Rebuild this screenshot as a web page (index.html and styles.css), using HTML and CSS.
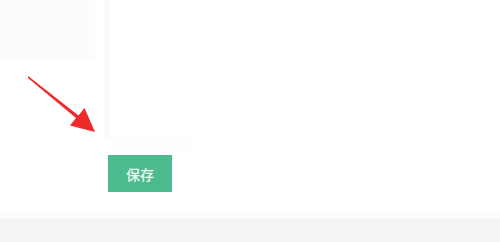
FILE: index.html
```html
<!DOCTYPE html>
<html lang="zh">
<head>
<meta charset="utf-8">
<link rel="stylesheet" href="styles.css">
</head>
<body>
<div class="page">
  <div class="main">
    <div class="side">
      <div class="side-top"></div>
    </div>
    <div class="divider"></div>
    <div class="content">
      <div class="editor"></div>
      <div class="editor-foot"></div>
      <div class="actions">
        <button class="btn-save">保存</button>
      </div>
    </div>
  </div>
  <div class="footer-line"></div>
  <div class="footer"></div>
  <svg class="arrow" width="100" height="140" viewBox="0 0 100 140">
    <polygon points="28,76 30,77.5 78.5,115.5 84.5,108 95,132 70,125.5 76,118 28,78" fill="#ee2a2a"/>
  </svg>
</div>
</body>
</html>
```

FILE: styles.css
```css
html, body {
  margin: 0;
  padding: 0;
  background: #ffffff;
}
.page {
  position: relative;
  width: 500px;
  height: 242px;
  overflow: hidden;
  font-family: "Noto Sans CJK SC", "Noto Sans", sans-serif;
}
.main {
  display: flex;
  height: 212px;
}
.side {
  width: 95px;
  flex: none;
}
.side-top {
  height: 62px;
  background: #fcfcfc;
}
.divider {
  width: 5px;
  margin-left: 9px;
  flex: none;
  height: 138px;
  background: #fafafa;
}
.content {
  flex: 1;
  display: flex;
  flex-direction: column;
}
.editor {
  height: 135px;
}
.editor-foot {
  height: 20px;
  width: 84px;
  background: #fefefe;
}
.actions {
  display: flex;
}
.btn-save {
  width: 64px;
  height: 37px;
  margin-left: -1px;
  border: none;
  border-radius: 0;
  background: #4cbc8f;
  color: #f2fbf7;
  font-family: "Noto Sans CJK SC", sans-serif;
  font-size: 14px;
  font-weight: 500;
  padding: 0;
}
.footer-line {
  height: 7px;
  background: #fbfbfb;
}
.footer {
  height: 23px;
  background: #f5f5f7;
}
.arrow {
  position: absolute;
  left: 0;
  top: 0;
}
```
